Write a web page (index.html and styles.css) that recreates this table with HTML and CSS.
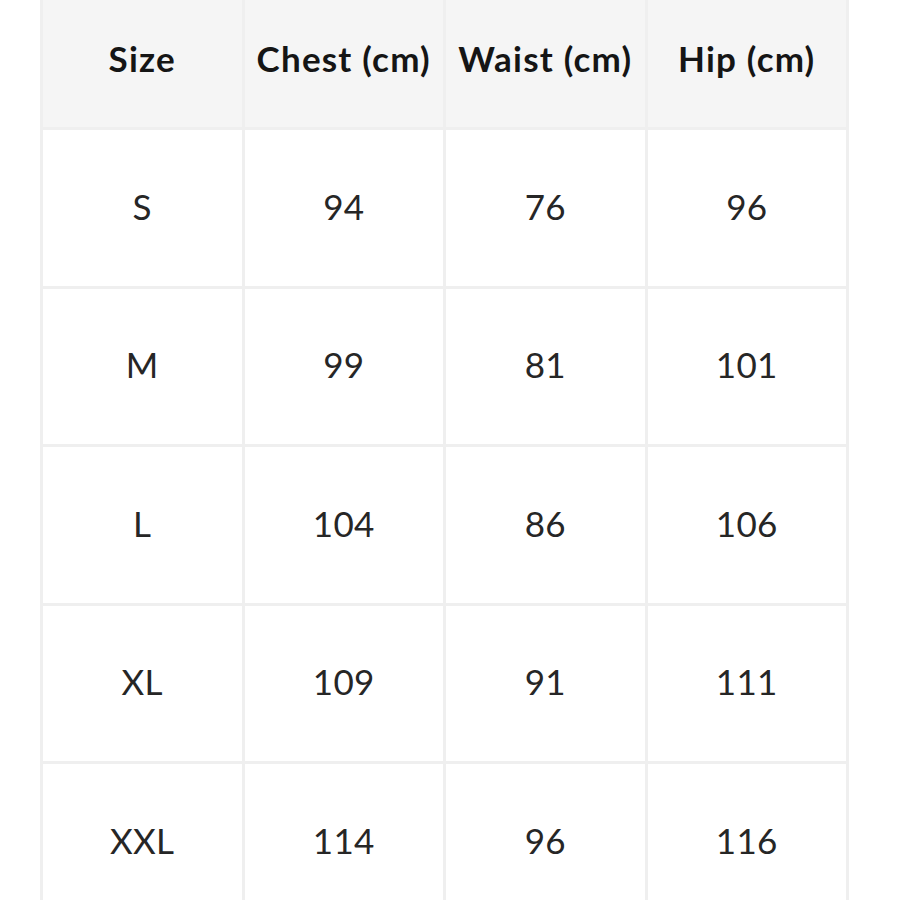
FILE: index.html
```html
<!DOCTYPE html>
<html>
<head>
<meta charset="utf-8">
<link rel="stylesheet" href="styles.css">
</head>
<body>
<div class="chart">
  <div class="cell head">Size</div>
  <div class="cell head">Chest (cm)</div>
  <div class="cell head">Waist (cm)</div>
  <div class="cell head">Hip (cm)</div>

  <div class="cell">S</div>
  <div class="cell">94</div>
  <div class="cell">76</div>
  <div class="cell">96</div>

  <div class="cell">M</div>
  <div class="cell">99</div>
  <div class="cell">81</div>
  <div class="cell">101</div>

  <div class="cell">L</div>
  <div class="cell">104</div>
  <div class="cell">86</div>
  <div class="cell">106</div>

  <div class="cell">XL</div>
  <div class="cell">109</div>
  <div class="cell">91</div>
  <div class="cell">111</div>

  <div class="cell">XXL</div>
  <div class="cell">114</div>
  <div class="cell">96</div>
  <div class="cell">116</div>
</div>
</body>
</html>
```

FILE: styles.css
```css
html, body {
  margin: 0;
  padding: 0;
  background: #ffffff;
  overflow: hidden;
}
body {
  font-family: "Lato", "Liberation Sans", sans-serif;
  color: #1c1c1c;
}
.chart {
  margin-left: 40px;
  width: 809px;
  box-sizing: border-box;
  padding: 0 3px 3px 3px;
  background: #efefef;
  display: grid;
  grid-template-columns: repeat(4, 1fr);
  grid-template-rows: 127px repeat(5, 155.5px);
  gap: 3px;
}
.cell {
  background: #ffffff;
  display: flex;
  align-items: center;
  justify-content: center;
  font-size: 35px;
  font-weight: 400;
  color: #262626;
  letter-spacing: 0.3px;
  padding-bottom: 4px;
}
.cell.head {
  background: #f5f5f5;
  font-size: 35px;
  font-weight: 700;
  color: #151515;
  padding-bottom: 12px;
  letter-spacing: 1.2px;
}
```
